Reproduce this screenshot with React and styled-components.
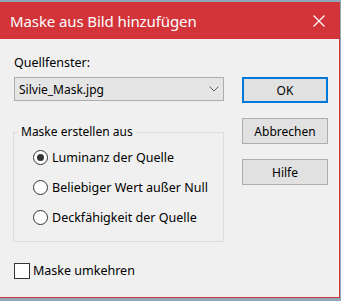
import React from 'react'
import styled, { createGlobalStyle } from 'styled-components'

const Global = createGlobalStyle`
    html, body {
        margin: 0;
        padding: 0;
        background: #8fa7ba;
        overflow: hidden;
    }
    body {
        font-family: "Noto Sans", "Open Sans", sans-serif;
        font-size: 12px;
        color: #000;
    }
`;

const Window = styled.div`
    margin-top: 2px;
    width: 340px;
    height: 296px;
    box-sizing: border-box;
    background: #f0f0f0;
    border-right: 1px solid #d2343a;
    border-bottom: 1px solid #d2343a;
    display: flex;
    flex-direction: column;
`;

const TitleBar = styled.div`
    height: 37px;
    flex-shrink: 0;
    background: #d2343a;
    color: #fff;
    display: flex;
    align-items: center;
    justify-content: space-between;
    padding: 0 14px 0 10px;
    font-size: 15px;
`;

const Title = styled.span`
    letter-spacing: -0.1px;
`;

const Body = styled.div`
    display: flex;
    padding: 16px 0 0 13px;
    gap: 18px;
`;

const LeftCol = styled.div`
    width: 211px;
    display: flex;
    flex-direction: column;
`;

const RightCol = styled.div`
    width: 86px;
    display: flex;
    flex-direction: column;
    gap: 15px;
    padding-top: 22px;
`;

const Label = styled.div`
    line-height: 16px;
    padding-left: 1px;
    font-size: 12.5px;
`;

const Select = styled.div`
    margin-top: 6px;
    margin-left: 1px;
    height: 24px;
    box-sizing: border-box;
    border: 1px solid #adadad;
    background: #e5e5e5;
    display: flex;
    align-items: center;
    justify-content: space-between;
    padding: 0 4px 0 4px;
    font-size: 12px;
`;

const Group = styled.fieldset`
    margin: 24px 0 0 0;
    padding: 9px 0 6px 19px;
    border: 1px solid #dcdcdc;
    display: flex;
    flex-direction: column;
    gap: 12px;
    height: 117px;
    box-sizing: border-box;
`;

const Legend = styled.legend`
    padding: 0 3px;
    margin-left: -15px;
    font-size: 12px;
    line-height: 14px;
`;

const Option = styled.div`
    display: flex;
    align-items: center;
    gap: 4px;
    font-size: 12.5px;
    height: 18px;
`;

const RadioDot = styled.span`
    width: 13px;
    height: 13px;
    border-radius: 50%;
    border: 1px solid #333;
    background: #fff;
    display: flex;
    align-items: center;
    justify-content: center;
    &::after {
        content: '';
        width: 7px;
        height: 7px;
        border-radius: 50%;
        background: ${props => props.checked ? '#333' : 'transparent'};
    }
`;

const CheckRow = styled.div`
    margin-top: 20px;
    margin-left: 1px;
    display: flex;
    align-items: center;
    gap: 3px;
    font-size: 12.5px;
`;

const CheckBox = styled.span`
    width: 14px;
    height: 14px;
    border: 1px solid #333;
    background: #fff;
`;

const Button = styled.div`
    height: 26px;
    box-sizing: border-box;
    border: ${props => props.primary ? '2px solid #0078d7' : '1px solid #adadad'};
    background: #e1e1e1;
    display: flex;
    align-items: center;
    justify-content: center;
    font-size: 12px;
`;

const Chevron = () => (
    <svg width="10" height="6" viewBox="0 0 10 6">
        <path d="M0.5 0.5 L5 5 L9.5 0.5" fill="none" stroke="#606060" strokeWidth="1" />
    </svg>
)

const CloseIcon = () => (
    <svg width="12" height="12" viewBox="0 0 12 12">
        <path d="M0.5 0.5 L11.5 11.5 M11.5 0.5 L0.5 11.5" stroke="#fff" strokeWidth="1.2" />
    </svg>
)

const options = [
    { text: 'Luminanz der Quelle', checked: true },
    { text: 'Beliebiger Wert außer Null', checked: false },
    { text: 'Deckfähigkeit der Quelle', checked: false },
]

export default function App() {
    return (
        <>
            <Global />
            <Window>
                <TitleBar>
                    <Title>Maske aus Bild hinzufügen</Title>
                    <CloseIcon />
                </TitleBar>
                <Body>
                    <LeftCol>
                        <Label>Quellfenster:</Label>
                        <Select>
                            <span>Silvie_Mask.jpg</span>
                            <Chevron />
                        </Select>
                        <Group>
                            <Legend>Maske erstellen aus</Legend>
                            {options.map((o, i) => (
                                <Option key={i}>
                                    <RadioDot checked={o.checked} />
                                    <span>{o.text}</span>
                                </Option>
                            ))}
                        </Group>
                        <CheckRow>
                            <CheckBox />
                            <span>Maske umkehren</span>
                        </CheckRow>
                    </LeftCol>
                    <RightCol>
                        <Button primary>OK</Button>
                        <Button>Abbrechen</Button>
                        <Button>Hilfe</Button>
                    </RightCol>
                </Body>
            </Window>
        </>
    )
}
